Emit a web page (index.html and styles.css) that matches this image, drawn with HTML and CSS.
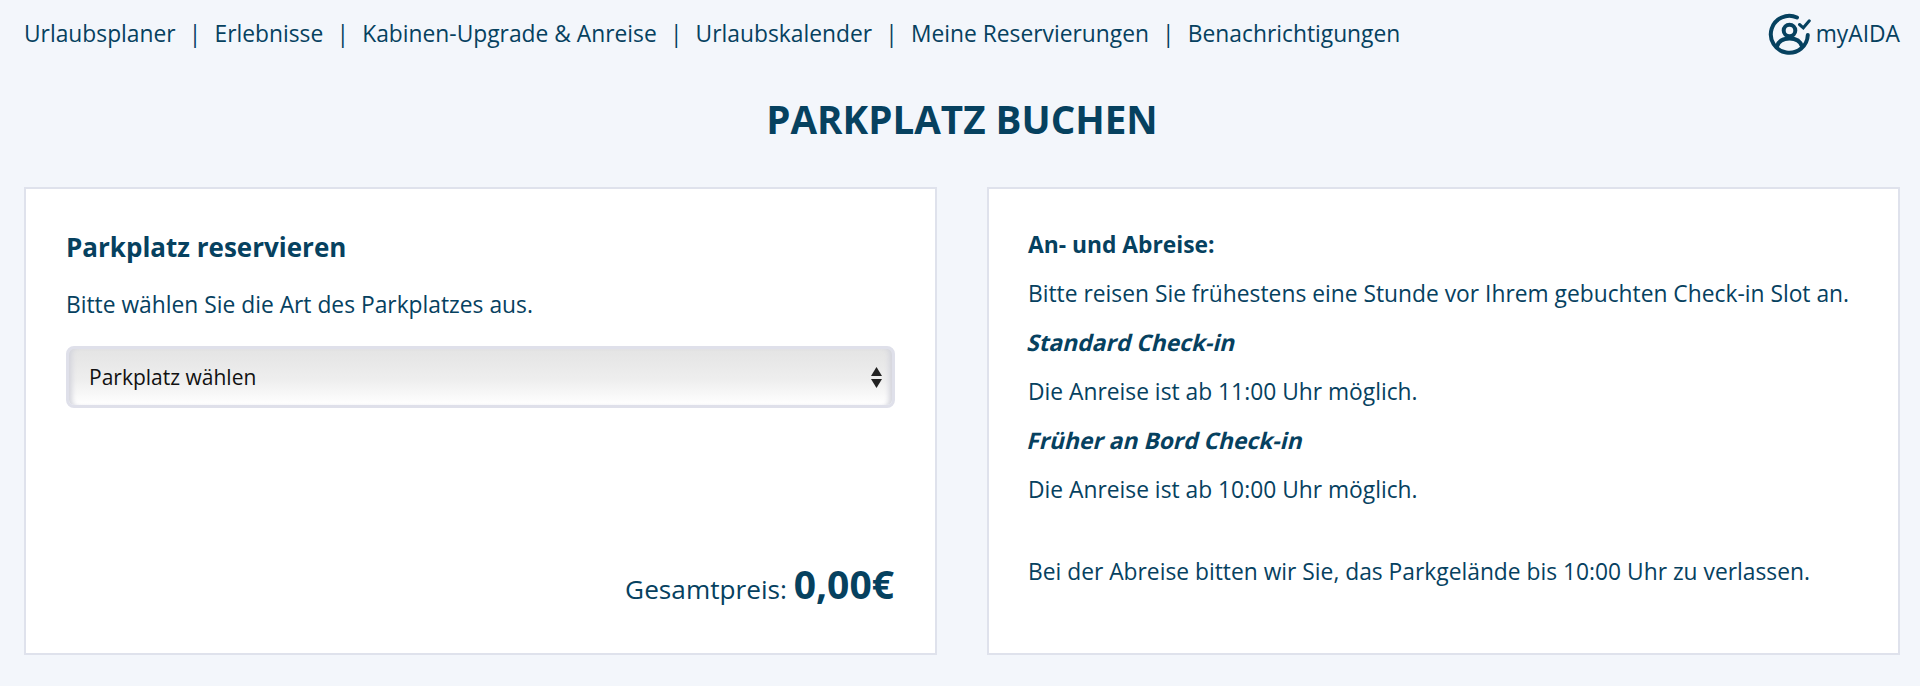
FILE: index.html
```html
<!DOCTYPE html>
<html lang="de">
<head>
    <meta charset="UTF-8">
    <title>Parkplatz buchen</title>
    <link rel="stylesheet" href="styles.css">
</head>
<body>
    <header class="topbar">
        <nav class="nav">
            <a href="#">Urlaubsplaner</a>
            <span class="sep">|</span>
            <a href="#">Erlebnisse</a>
            <span class="sep">|</span>
            <a href="#">Kabinen-Upgrade &amp; Anreise</a>
            <span class="sep">|</span>
            <a href="#">Urlaubskalender</a>
            <span class="sep">|</span>
            <a href="#">Meine Reservierungen</a>
            <span class="sep">|</span>
            <a href="#">Benachrichtigungen</a>
        </nav>
        <a class="account" href="#">
            <svg class="account-icon" viewBox="0 0 43 42" fill="none" stroke="#06415f" stroke-width="4" stroke-linecap="round">
                <path d="M29 4.500A18.500 18.500 0 1 0 39.800 22"/>
                <circle cx="21.500" cy="17.500" r="5.800"/>
                <path d="M9 33.500c1.500-5.500 6.500-8 12.500-8s11 2.500 12.500 8"/>
                <path d="M31.500 11.500l3.800 3.300 6-7" stroke-width="3"/>
            </svg>
            <span>myAIDA</span>
        </a>
    </header>

    <h1 class="page-title">PARKPLATZ BUCHEN</h1>

    <main class="cards">
        <section class="card card-form">
            <h2>Parkplatz reservieren</h2>
            <p class="hint">Bitte wählen Sie die Art des Parkplatzes aus.</p>
            <div class="select">
                <span>Parkplatz wählen</span>
                <svg class="arrows" viewBox="0 0 11 21" fill="#222">
                    <path d="M5.500 0L11 9H0z"/>
                    <path d="M0 12h11L5.500 21z"/>
                </svg>
            </div>
            <div class="total">Gesamtpreis: <strong>0,00€</strong></div>
        </section>
        <section class="card card-info">
            <p><b>An- und Abreise:</b></p>
            <p>Bitte reisen Sie frühestens eine Stunde vor Ihrem gebuchten Check-in Slot an.</p>
            <p><b class="slanted">Standard Check-in</b></p>
            <p>Die Anreise ist ab 11:00 Uhr möglich.</p>
            <p><b class="slanted">Früher an Bord Check-in</b></p>
            <p>Die Anreise ist ab 10:00 Uhr möglich.</p>
            <p class="spaced">Bei der Abreise bitten wir Sie, das Parkgelände bis 10:00 Uhr zu verlassen.</p>
        </section>
    </main>
</body>
</html>
```
FILE: styles.css
```css
* {
    box-sizing: border-box;
}
body {
    margin: 0;
    padding: 0 20px 0 24px;
    height: 686px;
    overflow: hidden;
    background: #f3f6fb;
    color: #06415f;
    font-family: 'Open Sans', sans-serif;
    font-size: 22.8px;
}
.topbar {
    display: flex;
    justify-content: space-between;
    align-items: center;
    height: 67px;
    margin-bottom: 1px;
}
.nav {
    display: flex;
    gap: 13.2px;
}
.nav a, .account {
    color: #06415f;
    text-decoration: none;
}
.account {
    display: flex;
    align-items: center;
    gap: 5px;
}
.account-icon {
    width: 43px;
    height: 42px;
}
.page-title {
    margin: 0;
    height: 119px;
    padding-top: 27px;
    text-align: center;
    font-size: 38.6px;
    line-height: 48px;
    font-weight: 700;
}
.cards {
    display: grid;
    grid-template-columns: 913px 913px;
    justify-content: space-between;
    height: 468px;
}
.card {
    background: #fff;
    border: 2px solid #dfe2ec;
}
.card-form {
    display: flex;
    flex-direction: column;
    padding: 40px 40px 42px;
}
.card-form h2 {
    margin: 0;
    font-size: 26px;
    line-height: 36px;
    font-weight: 700;
}
.hint {
    margin: 23px 0 0;
    line-height: 34px;
}
.select {
    display: flex;
    justify-content: space-between;
    align-items: center;
    height: 62px;
    margin-top: 24px;
    padding: 0 10px 0 20px;
    border: 3px solid #dfe0ea;
    border-radius: 8px;
    background: linear-gradient(#e4e4e4, #eeeeee 55%, #fff);
    box-shadow: inset 6px 0 5px -3px #d4d5dd, inset -6px 0 5px -3px #d4d5dd;
    color: #111;
    font-size: 21px;
}
.arrows {
    width: 11px;
    height: 21px;
}
.total {
    margin-top: auto;
    padding-right: 1px;
    text-align: right;
    font-size: 26.2px;
}
.total strong {
    font-size: 39px;
    line-height: 54px;
}
.card-info {
    padding: 31px 40px 0 39px;
}
.card-info p {
    margin: 0;
    line-height: 49px;
}
.slanted {
    display: inline-block;
    transform: skewX(-14deg);
}
.card-info .spaced {
    margin-top: 33px;
}
```
